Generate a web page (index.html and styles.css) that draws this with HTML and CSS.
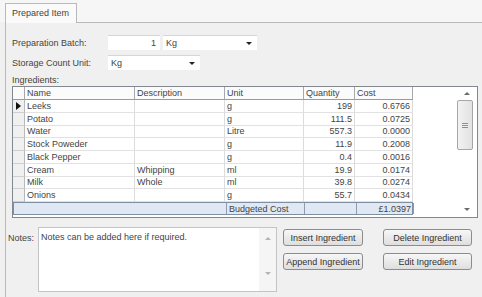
FILE: index.html
```html
<!DOCTYPE html>
<html lang="en">
<head>
    <meta charset="UTF-8">
    <title>Prepared Item</title>
    <link rel="stylesheet" href="styles.css">
</head>
<body>
    <div class="tabs">
        <div class="tab">Prepared Item</div>
    </div>
    <div class="panel">
        <div class="field-row">
            <span class="field-label">Preparation Batch:</span>
            <div class="textbox qty-box">1</div>
            <div class="combo batch-unit">Kg<span class="caret"></span></div>
        </div>
        <div class="field-row">
            <span class="field-label">Storage Count Unit:</span>
            <div class="combo storage-unit">Kg<span class="caret"></span></div>
        </div>
        <div class="section-label">Ingredients:</div>
        <div class="grid-box">
            <div class="grid">
                <div class="grid-row header-row">
                    <div class="cell row-head"></div>
                    <div class="cell">Name</div>
                    <div class="cell">Description</div>
                    <div class="cell">Unit</div>
                    <div class="cell">Quantity</div>
                    <div class="cell">Cost</div>
                </div>
                <div class="grid-row">
                    <div class="cell row-head"><span class="marker"></span></div>
                    <div class="cell">Leeks</div>
                    <div class="cell"></div>
                    <div class="cell">g</div>
                    <div class="cell num">199</div>
                    <div class="cell num">0.6766</div>
                </div>
                <div class="grid-row">
                    <div class="cell row-head"></div>
                    <div class="cell">Potato</div>
                    <div class="cell"></div>
                    <div class="cell">g</div>
                    <div class="cell num">111.5</div>
                    <div class="cell num">0.0725</div>
                </div>
                <div class="grid-row">
                    <div class="cell row-head"></div>
                    <div class="cell">Water</div>
                    <div class="cell"></div>
                    <div class="cell">Litre</div>
                    <div class="cell num">557.3</div>
                    <div class="cell num">0.0000</div>
                </div>
                <div class="grid-row">
                    <div class="cell row-head"></div>
                    <div class="cell">Stock Poweder</div>
                    <div class="cell"></div>
                    <div class="cell">g</div>
                    <div class="cell num">11.9</div>
                    <div class="cell num">0.2008</div>
                </div>
                <div class="grid-row">
                    <div class="cell row-head"></div>
                    <div class="cell">Black Pepper</div>
                    <div class="cell"></div>
                    <div class="cell">g</div>
                    <div class="cell num">0.4</div>
                    <div class="cell num">0.0016</div>
                </div>
                <div class="grid-row">
                    <div class="cell row-head"></div>
                    <div class="cell">Cream</div>
                    <div class="cell">Whipping</div>
                    <div class="cell">ml</div>
                    <div class="cell num">19.9</div>
                    <div class="cell num">0.0174</div>
                </div>
                <div class="grid-row">
                    <div class="cell row-head"></div>
                    <div class="cell">Milk</div>
                    <div class="cell">Whole</div>
                    <div class="cell">ml</div>
                    <div class="cell num">39.8</div>
                    <div class="cell num">0.0274</div>
                </div>
                <div class="grid-row">
                    <div class="cell row-head"></div>
                    <div class="cell">Onions</div>
                    <div class="cell"></div>
                    <div class="cell">g</div>
                    <div class="cell num">55.7</div>
                    <div class="cell num">0.0434</div>
                </div>
                <div class="grid-row total-row">
                    <div class="cell total-blank"></div>
                    <div class="cell total-cell">Budgeted Cost</div>
                    <div class="cell total-plain"></div>
                    <div class="cell total-cell num">£1.0397</div>
                </div>
            </div>
            <div class="vscroll">
                <span class="arrow-up"></span>
                <div class="thumb"><span class="grip"></span></div>
                <span class="arrow-down"></span>
            </div>
        </div>
        <div class="notes-row">
            <span class="notes-label">Notes:</span>
            <div class="notes-box">
                <div class="notes-text">Notes can be added here if required.</div>
                <div class="notes-scroll">
                    <span class="arrow-up light"></span>
                    <span class="arrow-down light"></span>
                </div>
            </div>
            <div class="buttons">
                <button class="button">Insert Ingredient</button>
                <button class="button">Delete Ingredient</button>
                <button class="button">Append Ingredient</button>
                <button class="button">Edit Ingredient</button>
            </div>
        </div>
    </div>
</body>
</html>
```

FILE: styles.css
```css
body {
    margin: 0;
    width: 482px;
    height: 297px;
    overflow: hidden;
    background-color: #f0f0f0;
    font-family: "Liberation Sans", Arial, sans-serif;
    font-size: 9px;
    color: #444444;
}

.tabs {
    display: flex;
    padding: 3px 0 0 5px;
    background-color: #f6f6f6;
}

.tab {
    width: 72px;
    height: 20px;
    box-sizing: border-box;
    margin-bottom: -1px;
    padding: 0 0 1px 6px;
    display: flex;
    align-items: center;
    background-color: #fafafa;
    border: 1px solid #b9b9b9;
    border-bottom: none;
    position: relative;
}

.panel {
    margin-left: 5px;
    height: 275px;
    box-sizing: border-box;
    border-left: 1px solid #b9b9b9;
    border-top: 1px solid #b9b9b9;
    padding: 12px 0 0 6px;
}

.field-row {
    display: flex;
    align-items: center;
    height: 15px;
    margin-bottom: 5px;
}

.field-label {
    width: 96px;
}

.textbox,
.combo {
    height: 15px;
    box-sizing: border-box;
    display: flex;
    align-items: center;
    background-color: #ffffff;
    border-top: 1px solid #d6d6d6;
}

.qty-box {
    width: 52px;
    justify-content: flex-end;
    padding-right: 4px;
}

.combo {
    padding-left: 3px;
}

.batch-unit {
    width: 94px;
    margin-left: 3px;
}

.storage-unit {
    width: 92px;
}

.caret {
    margin-left: auto;
    margin-right: 5px;
    border-left: 3px solid transparent;
    border-right: 3px solid transparent;
    border-top: 3px solid #222222;
}

.section-label {
    height: 11px;
    margin-top: 3px;
}

.grid-box {
    width: 466px;
    height: 132px;
    box-sizing: border-box;
    display: flex;
    background-color: #ffffff;
    border: 1px solid #838890;
}

.grid {
    width: 400px;
}

.grid-row {
    display: grid;
    grid-template-columns: 12px 110px 90px 79px 51px 58px;
    height: 12.75px;
}

.cell {
    box-sizing: border-box;
    display: flex;
    align-items: center;
    padding: 0 2px;
    white-space: nowrap;
    overflow: hidden;
    border-right: 1px solid #dcdcdc;
    border-bottom: 1px solid #e2e2e2;
}

.num {
    justify-content: flex-end;
}

.row-head {
    background-color: #f0f0f0;
    border-right: 1px solid #b8b8b8;
    border-bottom: 1px solid #cfcfcf;
    padding: 0 0 0 3px;
}

.header-row {
    height: 13px;
}

.header-row .cell {
    border-right: 1px solid #a8a8a8;
    border-bottom: 1px solid #9a9a9a;
    background-color: #fbfbfb;
}

.marker {
    border-left: 5px solid #111111;
    border-top: 4px solid transparent;
    border-bottom: 4px solid transparent;
}

.total-row {
    height: 13px;
    background-color: #dfe8f3;
    box-sizing: border-box;
    border: 1px solid #7e8ea3;
}

.total-blank {
    grid-column: span 3;
    border: none;
}

.total-row .cell {
    border-bottom: none;
}

.total-cell {
    border-left: 1px solid #8d9bb0;
    border-right: 1px solid #8d9bb0;
}

.total-plain {
    border-right: none;
}

.vscroll {
    width: 17px;
    margin-left: auto;
    margin-right: 2px;
    display: flex;
    flex-direction: column;
    align-items: center;
    padding: 5px 0 6px;
    box-sizing: border-box;
}

.arrow-up {
    border-left: 3px solid transparent;
    border-right: 3px solid transparent;
    border-bottom: 3px solid #6a6a6a;
}

.arrow-down {
    margin-top: auto;
    border-left: 3px solid transparent;
    border-right: 3px solid transparent;
    border-top: 3px solid #6a6a6a;
}

.arrow-up.light {
    border-bottom-color: #b4b4b4;
}

.arrow-down.light {
    border-top-color: #b4b4b4;
}

.thumb {
    width: 16px;
    height: 50px;
    box-sizing: border-box;
    margin-top: 5px;
    margin-left: -4px;
    display: flex;
    align-items: center;
    justify-content: center;
    background: linear-gradient(to right, #f2f2f2, #e2e2e2);
    border: 1px solid #a6a6a6;
    border-radius: 2px;
}

.grip {
    width: 6px;
    height: 5px;
    border-top: 1px solid #8c8c8c;
    border-bottom: 1px solid #8c8c8c;
    box-sizing: border-box;
    background: linear-gradient(#f2f2f2 1px, #8c8c8c 1px, #8c8c8c 2px, #f2f2f2 2px);
}

.notes-row {
    display: flex;
    margin-top: 9px;
    margin-left: -4px;
}

.notes-label {
    width: 30px;
    padding-top: 6px;
}

.notes-box {
    width: 239px;
    height: 65px;
    box-sizing: border-box;
    display: flex;
    background-color: #ffffff;
    border: 1px solid #c4c4c4;
}

.notes-text {
    flex: 1;
    padding: 4px 2px;
}

.notes-scroll {
    width: 17px;
    display: flex;
    flex-direction: column;
    align-items: center;
    padding: 9px 0 16px;
    box-sizing: border-box;
    background-color: #f5f5f5;
}

.buttons {
    display: grid;
    grid-template-columns: 80px 89px;
    column-gap: 20px;
    row-gap: 7px;
    align-content: start;
    margin: 2px 0 0 6px;
}

.button {
    height: 17px;
    padding: 0;
    font: inherit;
    color: #333333;
    background: linear-gradient(#f7f7f7, #dedede);
    border: 1px solid #8c8c8c;
    border-radius: 3px;
}
```
